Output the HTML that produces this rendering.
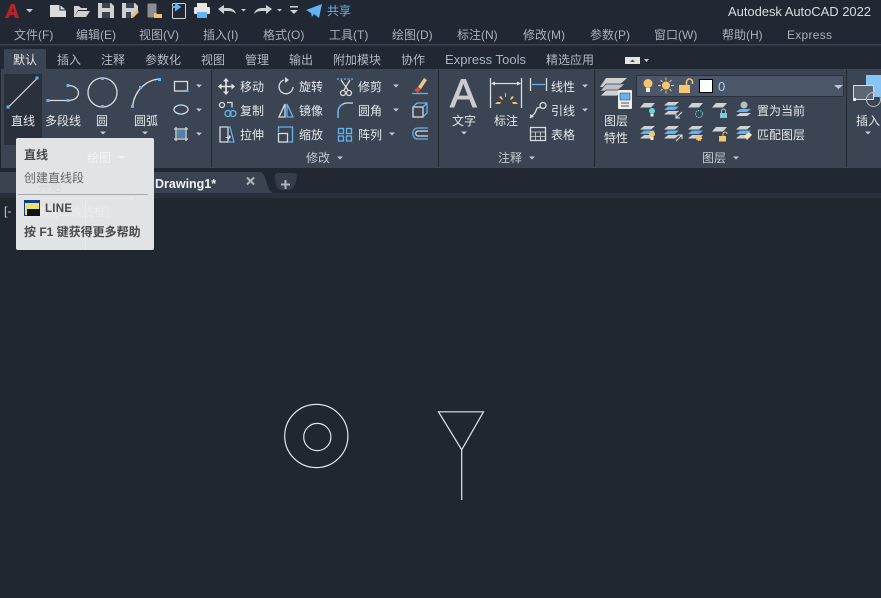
<!DOCTYPE html>
<html><head><meta charset="utf-8"><style>
html,body{margin:0;padding:0;background:#21272f;width:881px;height:598px;overflow:hidden}
svg{display:block}
text{font-family:"Liberation Sans","Noto Sans CJK SC",sans-serif;font-size:12px;fill:#d3d7dc}
.m text{fill:#a9b1bb}
.t text{fill:#b3bac3}
.t text.a{fill:#e6e8eb}
.r text{fill:#e4e7eb}
.ic{fill:none;stroke:#d9dbdd;stroke-width:1.3}
.bl{fill:none;stroke:#62b4f0;stroke-width:1.3}
.q{fill:#62b4f0}
.ar{fill:#c4c8cd}
</style></head><body>
<svg width="881" height="598" viewBox="0 0 881 598" xmlns="http://www.w3.org/2000/svg">
<defs>
<path id="dn" d="M-3-1.500h6l-3 3z" class="ar"/>
<path id="pl" d="M4 0h11l-4 4.500H0z" fill="#cfd1d3"/>
<g id="st"><path d="M4 0h11l-4 3.500H0z" fill="#cfd1d3"/><path d="M4 4.500h11l-4 3.500H0z" fill="#62b4f0"/><path d="M4 9h11l-4 3.500H0z" fill="#cfd1d3"/></g>
</defs>

<rect width="881" height="598" fill="#21272f"/>
<rect width="881" height="69" fill="#212833"/>
<rect y="44" width="881" height="1.500" fill="#3b4350"/>

<!-- QAT -->
<path fill-rule="evenodd" d="M5 18L11 4h3.500l4.500 14h-4l-1-3h-4l-1.500 3zM11.500 12h2.500L13 8z" fill="#b5232a"/>
<path d="M26 9h7l-3.500 3.500z" fill="#c9cdd2"/>
<path d="M50 5h10l6 5v7H50z" fill="#dcdcdc"/><path d="M60 5v5h6" fill="none" stroke="#21272f"/>
<path d="M74 8V6h5l2 2h6v2h-9l-4 7zM74 17l4-6h12l-4 6z" fill="#d0d0d0"/>
<path d="M98 3h13l3 3v12H98z" fill="#cfcfcf"/><rect x="102" y="3" width="8" height="5" fill="#3b4350"/><rect x="102" y="12" width="8" height="6" fill="#3b4350"/>
<path d="M122 3h13l3 3v5l-6 7h-10z" fill="#cfcfcf"/><rect x="126" y="3" width="8" height="5" fill="#3b4350"/><rect x="126" y="12" width="5" height="6" fill="#3b4350"/><path d="M131 17l6-7 2 2-6 6z" fill="#f1b75e"/>
<rect x="147.500" y="3.500" width="9" height="14" rx="1" fill="#8b8f94"/><path d="M154 13h2l1 1h5v4h-8z" fill="#f1c26a"/>
<rect x="172.500" y="3.500" width="13" height="15" rx="1" fill="none" stroke="#cfd2d5"/><path d="M172 7h8M176 4.500v5l3.500-2.500z" stroke="#62b4f0" stroke-width="2" fill="#62b4f0"/>
<rect x="197" y="3" width="10" height="5" fill="#e5e5e5"/><rect x="194" y="7" width="16" height="7" rx="1" fill="#e5e5e5"/><rect x="197" y="12" width="10" height="6" fill="#62b4f0"/>
<path d="M218 9l6-4v3h4c4 0 7 2 8 6-2-2-4-3-8-3h-4v3z" fill="#cfd2d5"/>
<path d="M241 9h5l-2.500 2.500z" fill="#c9cdd2"/>
<path d="M272 9l-6-4v3h-4c-4 0-7 2-8 6 2-2 4-3 8-3h4v3z" fill="#cfd2d5"/>
<path d="M277 9h5l-2.500 2.500z" fill="#c9cdd2"/>
<rect x="290" y="6" width="8" height="1.500" fill="#cfd2d5"/><path d="M290 10h8l-4 4z" fill="#cfd2d5"/>
<path d="M306 10l16-6-3 14-5-4-2 3-1-4z" fill="#62b4f0"/>
<text x="327" y="15" style="fill:#62b4f0">共享</text>
<text x="728" y="16" style="font-size:13px;fill:#d8dce0" textLength="143">Autodesk AutoCAD 2022</text>

<!-- Menu -->
<g class="m">
<text x="14" y="39">文件(F)</text><text x="76" y="39">编辑(E)</text><text x="139" y="39">视图(V)</text><text x="203" y="39">插入(I)</text><text x="263" y="39">格式(O)</text><text x="329" y="39">工具(T)</text><text x="392" y="39">绘图(D)</text><text x="457" y="39">标注(N)</text><text x="523" y="39">修改(M)</text><text x="590" y="39">参数(P)</text><text x="654" y="39">窗口(W)</text><text x="722" y="39">帮助(H)</text><text x="787" y="39" textLength="45">Express</text>
</g>

<!-- Tabs -->
<rect x="4" y="49" width="42" height="20" fill="#3b4452"/>
<g class="t">
<text class="a" x="13" y="64">默认</text><text x="57" y="64">插入</text><text x="101" y="64">注释</text><text x="145" y="64">参数化</text><text x="201" y="64">视图</text><text x="245" y="64">管理</text><text x="289" y="64">输出</text><text x="333" y="64">附加模块</text><text x="401" y="64">协作</text><text x="445" y="64" textLength="81" style="font-size:13px;fill:#a9b4c2">Express Tools</text><text x="546" y="64">精选应用</text>
</g>
<rect x="625" y="57" width="15" height="7" fill="#e4e4e4"/><path d="M630 62h5l-2.500-2.500z" fill="#555"/>
<path d="M644 59h5l-2.500 3z" fill="#c9cdd2"/>

<!-- Ribbon -->
<rect x="1" y="69" width="880" height="99" fill="#3b4452"/>
<rect x="211" y="70" width="1" height="97" fill="#22282f"/><rect x="438" y="70" width="1" height="97" fill="#22282f"/><rect x="594" y="70" width="1" height="97" fill="#22282f"/><rect x="846" y="70" width="1" height="97" fill="#22282f"/>
<rect x="4" y="74" width="38" height="71" fill="#2a313d"/>

<g class="r">
<!-- draw -->
<path d="M8.500 107L37.500 78" stroke="#d9dbdd" stroke-width="1.200" fill="none"/><rect x="6.500" y="105.500" width="3" height="3" class="q"/><rect x="35.500" y="76.500" width="3" height="3" class="q"/>
<text x="11" y="125">直线</text>
<path d="M48 100.500h20M68 85.500c14 0 14 15 0 15" class="ic"/><rect x="46.500" y="99" width="3" height="3" class="q"/><rect x="66.500" y="99" width="3" height="3" class="q"/><rect x="66.500" y="84" width="3" height="3" class="q"/>
<text x="45" y="125">多段线</text>
<circle cx="102.500" cy="92.500" r="14.500" class="ic"/><rect x="101" y="77" width="3" height="3" class="q"/><rect x="101" y="105" width="3" height="3" class="q"/>
<text x="96" y="125">圆</text><use href="#dn" x="103" y="133"/>
<path d="M132.500 106C135 90 146 80 159.500 79" class="ic"/><rect x="131" y="105" width="3" height="3" class="q"/><rect x="139" y="86" width="3" height="3" class="q"/><rect x="158" y="78" width="3" height="3" class="q"/>
<text x="134" y="125">圆弧</text><use href="#dn" x="145" y="133"/>
<rect x="174.500" y="81.500" width="13" height="9.500" class="ic"/><rect x="186" y="89.500" width="2.500" height="2.500" class="q"/><use href="#dn" x="199" y="86"/>
<ellipse cx="181" cy="109.500" rx="7" ry="4.500" class="ic"/><rect x="180" y="104" width="2" height="2" class="q"/><rect x="180" y="113" width="2" height="2" class="q"/><use href="#dn" x="199" y="110"/>
<path d="M174 129h14M174 139h14M176 127v14M186 127v14" class="ic"/><rect x="177" y="130" width="8" height="8" fill="#62b4f0" opacity=".55"/><use href="#dn" x="199" y="134"/>

<!-- modify -->
<path d="M226 79v15M219 86.500h15" stroke="#e4e6e8" stroke-width="1.600"/><path d="M226 78l-3 3.500h6zM226 95l-3-3.500h6zM218 86.500l3.500-3v6zM235 86.500l-3.500-3v6z" fill="#e4e6e8"/>
<text x="240" y="91">移动</text>
<path d="M284 80A7 7 0 1 0 293 87" class="ic"/><path d="M285 77l4 3-4 3z" fill="#d9dbdd"/>
<text x="299" y="91">旋转</text>
<path d="M337 79h16" class="bl" stroke-dasharray="2 1.500"/><path d="M341 80l7 10M350 80l-6 10" class="ic"/><circle cx="343" cy="93" r="2.500" class="ic"/><circle cx="349" cy="93" r="2.500" class="ic"/>
<text x="358" y="91">修剪</text><use href="#dn" x="396" y="86"/>
<path d="M418 87l6-9 3 2-6 9z" fill="#e9c98b"/><path d="M414 90l4-3 3 2-3 4z" fill="#cf4b45"/><path d="M412 93.500h16" class="bl"/>
<circle cx="222" cy="105" r="2.500" class="ic"/><path d="M227 102.500h5v5" class="ic"/><circle cx="228" cy="113.500" r="3" class="bl"/><circle cx="233" cy="113.500" r="3" class="bl"/>
<text x="240" y="115">复制</text>
<path d="M285 104v13h-6z" class="ic"/><path d="M287 104v13h6z" class="bl"/>
<text x="299" y="115">镜像</text>
<path d="M338 118v-6c0-5 4-9 9-9h6" class="ic"/><path d="M338 118v-6c0-5 3-7 6-8" class="bl"/>
<text x="358" y="115">圆角</text><use href="#dn" x="396" y="110"/>
<rect x="413" y="107" width="10" height="10" class="ic"/><path d="M413 107l4-4h10v10l-4 4M423 107l4-4" class="bl"/>
<path d="M220 142v-15h8v15z" class="ic"/><path d="M228 127h2l4 15h-6" class="bl"/><path d="M225 137h4v-2l2 2-2 2z" fill="#e4e6e8"/>
<text x="240" y="139">拉伸</text>
<rect x="278.500" y="133.500" width="9" height="8.500" class="ic"/><path d="M278.500 132v-5h14v15h-4" class="bl"/>
<text x="299" y="139">缩放</text>
<rect x="338.500" y="128.500" width="5" height="5" class="bl"/><rect x="346.500" y="128.500" width="5" height="5" class="bl"/><rect x="338.500" y="136" width="5" height="5" class="bl"/><rect x="346.500" y="136" width="5" height="5" class="bl"/>
<text x="358" y="139">阵列</text><use href="#dn" x="392" y="134"/>
<path d="M428 128h-10c-7 0-7 11 0 11h10" class="bl"/><path d="M428 131h-10c-3 0-3 5 0 5h10" class="ic"/>
<text x="306" y="162" style="fill:#c3c9d0">修改</text><use href="#dn" x="340" y="158"/>

<!-- annotate -->
<text x="450" y="107" style="font-size:40px;fill:#c9cbce;stroke:#c9cbce;stroke-width:.9">A</text>
<text x="452" y="125">文字</text><use href="#dn" x="464" y="133"/>
<path d="M490.500 78v30M521.500 78v30M492 83.500h28" class="ic"/><path d="M491 83.500l4-2v4zM521 83.500l-4-2v4z" fill="#d9dbdd"/>
<path d="M505 93.500l1-1v4l-1 1zM499 97l2-1 2 3-1 1zM512 96l-2 3 1 1 3-3zM495 104h5l1-2h-4zM516 102h-4l1 2h5z" fill="#f0bf66"/>
<text x="494" y="125">标注</text>
<path d="M530.500 78v13M546.500 78v13" class="ic"/><path d="M532 84.500h13" class="bl"/>
<text x="551" y="91">线性</text><use href="#dn" x="585" y="86"/>
<path d="M530 118l5-5 2-5 4-1" class="ic"/><circle cx="543" cy="105.500" r="3" class="ic"/><path d="M530 118v-4l4 3z" fill="#d9dbdd"/>
<text x="551" y="115">引线</text><use href="#dn" x="585" y="110"/>
<rect x="530.500" y="127.500" width="15" height="13" class="ic"/><path d="M530.500 132h15M530.500 136.500h15M535.500 132v8.500M540.500 132v8.500" fill="none" stroke="#d9dbdd" stroke-width=".8"/>
<text x="551" y="139">表格</text>
<text x="498" y="162" style="fill:#c3c9d0">注释</text><use href="#dn" x="532" y="158"/>

<!-- layers -->
<path d="M606 78h21l-10 9h-17z" fill="#cfd1d3"/><path d="M606 84h19l-8 7h-17z" fill="#bfc2c5" stroke="#3b4452" stroke-width=".7"/><path d="M606 90h15v3l-4 3h-17z" fill="#cfd1d3" stroke="#3b4452" stroke-width=".7"/>
<rect x="618" y="90" width="14" height="19" rx="1" fill="#eeeeee"/><rect x="620" y="93" width="10" height="7" fill="#62b4f0" stroke="#333" stroke-width=".5"/><path d="M621 103h8M621 106h8" stroke="#555"/>
<text x="604" y="125">图层</text><text x="604" y="142">特性</text>
<text x="702" y="162" style="fill:#c3c9d0">图层</text><use href="#dn" x="736" y="158"/>

<rect x="636.500" y="75.500" width="207" height="21" rx="1" fill="#4b5668" stroke="#2a313c"/>
<circle cx="648" cy="83.500" r="4.500" fill="#f7c66f"/><rect x="646" y="88" width="4" height="4" fill="#eee"/>
<circle cx="666" cy="85.500" r="4" fill="#f7c66f"/><path d="M666 77.500v3M666 90.500v3M658 85.500h3M671 85.500h3M660.500 80l2 2M669.500 89l2 2M660.500 91l2-2M669.500 82l2-2" stroke="#f7c66f"/>
<rect x="679" y="85" width="11" height="8" fill="#f7c66f"/><path d="M686.500 85v-3a3 3 0 0 1 6 0v2" fill="none" stroke="#f7c66f" stroke-width="1.500"/>
<rect x="699.500" y="79.500" width="13" height="13" fill="#fff" stroke="#000"/>
<text x="718" y="91" style="font-size:13px;fill:#a9d0f2">0</text>
<path d="M834 85h9l-4.500 4z" fill="#c4c8cd"/>

<use href="#pl" x="640" y="103"/><circle cx="652" cy="111" r="3" fill="#6cd2dc"/><rect x="650.500" y="114" width="3" height="2.500" fill="#eee"/>
<use href="#st" x="664" y="102"/><path d="M676 118l6-6M676 114v4h4" stroke="#e4e6e8" fill="none"/>
<use href="#pl" x="688" y="103"/><circle cx="699" cy="114" r="3.500" fill="none" stroke="#6cd2dc" stroke-dasharray="1.500 1"/>
<use href="#pl" x="712" y="103"/><rect x="720" y="113" width="7" height="5" fill="#6cd2dc"/><path d="M721.500 113v-2a2 2 0 0 1 4 0v2" fill="none" stroke="#6cd2dc"/>
<circle cx="744" cy="105" r="3.500" fill="#b9bcc0"/><path d="M740 109h11l-4 3h-11z" fill="#62b4f0"/><path d="M740 113h11l-4 3h-11z" fill="#cfd1d3"/>
<text x="757" y="115">置为当前</text>

<use href="#st" x="640" y="126"/><circle cx="652" cy="134" r="3" fill="#f7c66f"/><rect x="650.500" y="137" width="3" height="3" fill="#eee"/>
<use href="#st" x="664" y="126"/><path d="M676 141l6-6M678 135h4v4" stroke="#e4e6e8" fill="none"/>
<use href="#st" x="688" y="126"/><circle cx="699" cy="138" r="2.500" fill="#f7c66f" stroke="#f7c66f" stroke-dasharray="1 1" stroke-width="1.500"/>
<use href="#pl" x="712" y="127"/><rect x="719" y="136" width="7" height="5.500" fill="#f7c66f"/><path d="M723 136v-2a2 2 0 0 1 4 0" fill="none" stroke="#f7c66f"/>
<use href="#st" x="736" y="126"/><path d="M744 136l5-4 3 3-5 5z" fill="#f0e2b6"/>
<text x="757" y="139">匹配图层</text>

<!-- insert -->
<path d="M866 75h15v22h-15z" fill="#88c4f3"/>
<rect x="853.500" y="85.500" width="20" height="14" fill="#5f6673" stroke="#d9dbdd"/><rect x="853" y="98" width="3" height="3" fill="#e4e6e8"/>
<circle cx="873.500" cy="99.500" r="7" fill="none" stroke="#b9bcc0"/>
<text x="856" y="125">插入</text><use href="#dn" x="868" y="133"/>
</g>

<!-- doc tabs -->
<rect x="0" y="168" width="881" height="27" fill="#212833"/>
<rect x="0" y="193" width="881" height="5" fill="#2a303a"/>
<path d="M0 172H260c7 0 6 21 14 21H0z" fill="#3a4351"/>
<path d="M275 176c0-2 1-3 3-3h16c2 0 4 2 2 8-1 5-3 9-7 9h-7c-5 0-7-5-7-14z" fill="#353d4a"/>
<text x="155" y="188" style="font-size:12.500px;font-weight:bold;fill:#f0f2f4">Drawing1*</text>
<path d="M247 177.500l7 7M254 177.500l-7 7" stroke="#b1b5ba" stroke-width="2"/>
<path d="M281 184.500h9M285.500 180v9" stroke="#b1b5ba" stroke-width="2"/>
<text x="4" y="215" style="fill:#c9cdd2">[-</text>

<!-- drawing -->
<g fill="none" stroke="#e3e5e7" stroke-width="1.200">
<circle cx="316.300" cy="436" r="31.600"/><circle cx="317.300" cy="437" r="13.600"/>
<path d="M438.500 411.800H483.500L461.700 449.800ZM461.700 449.800V500"/>
</g>

<!-- tooltip -->
<rect x="16" y="138" width="138" height="112" rx="2" fill="#e2e3e4"/>
<text x="87" y="162" style="fill:#f3f3f3">绘图</text><path d="M118 156h7l-3.500 3z" fill="#f3f3f3"/>
<g opacity=".55"><text x="38" y="191" style="fill:#cfd0d1">开始</text><text x="24" y="216" style="fill:#f4f4f4;font-size:12px">[俯视][二维线框]</text><path d="M85.500 200v50M40 198.500h94" stroke="#f4f4f4"/></g>
<text x="24" y="159" style="font-weight:bold;fill:#4a4a4a">直线</text>
<text x="24" y="182" style="fill:#666">创建直线段</text>
<rect x="18" y="194" width="130" height="1" fill="#a8aaac"/>
<rect x="24.500" y="200.500" width="15" height="15" fill="#eae46a" stroke="#123c8c"/><rect x="25" y="200" width="15" height="3" fill="#123c8c"/><rect x="27" y="209" width="13" height="7" fill="#111"/>
<text x="45" y="212" textLength="27" style="font-weight:bold;font-size:11.500px;fill:#4a4a4a">LINE</text>
<text x="24" y="236" style="font-weight:bold;fill:#4a4a4a">按 F1 键获得更多帮助</text>
</svg>
</body></html>
